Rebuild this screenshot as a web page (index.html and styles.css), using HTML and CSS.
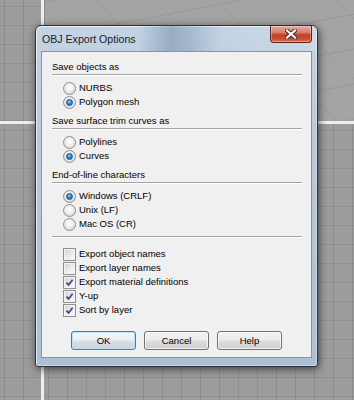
FILE: index.html
```html
<!DOCTYPE html>
<html>
<head>
<meta charset="utf-8">
<title>OBJ Export Options</title>
<link rel="stylesheet" href="styles.css">
</head>
<body>
<div class="desk">
  <div class="views">
    <div class="vp grid"></div>
    <div class="vp persp">
      <svg class="persp-lines" width="310" height="121" viewBox="0 0 310 121">
        <g stroke="#989898" stroke-width="1" fill="none">
          <line x1="-40" y1="10" x2="330" y2="-60"/>
          <line x1="-40" y1="45" x2="330" y2="-25"/>
          <line x1="-40" y1="80" x2="330" y2="10"/>
          <line x1="-40" y1="115" x2="330" y2="45"/>
          <line x1="-40" y1="150" x2="330" y2="80"/>
          <line x1="-40" y1="185" x2="330" y2="115"/>
          <line x1="-20" y1="-10" x2="120" y2="130"/>
          <line x1="40" y1="-10" x2="180" y2="130"/>
          <line x1="100" y1="-10" x2="240" y2="130"/>
          <line x1="160" y1="-10" x2="300" y2="130"/>
          <line x1="220" y1="-10" x2="360" y2="130"/>
          <line x1="280" y1="-10" x2="420" y2="130"/>
        </g>
      </svg>
    </div>
    <div class="vp grid"></div>
    <div class="vp grid"></div>
  </div>

  <div class="dlg">
    <div class="titlebar">
      <span class="title">OBJ Export Options</span>
      <div class="close">
        <svg width="12" height="10" viewBox="0 0 12 10">
          <path d="M2 1.5 L10 8.5 M10 1.5 L2 8.5" stroke="#3a2a28" stroke-width="4" stroke-linecap="square"/>
          <path d="M2 1.5 L10 8.5 M10 1.5 L2 8.5" stroke="#ffffff" stroke-width="2.2" stroke-linecap="square"/>
        </svg>
      </div>
    </div>
    <div class="client">
      <div class="hdr">Save objects as</div>
      <div class="sep"></div>
      <div class="opts">
        <div class="row"><span class="radio"></span><span>NURBS</span></div>
        <div class="row"><span class="radio on"></span><span>Polygon mesh</span></div>
      </div>

      <div class="hdr">Save surface trim curves as</div>
      <div class="sep"></div>
      <div class="opts">
        <div class="row"><span class="radio"></span><span>Polylines</span></div>
        <div class="row"><span class="radio on"></span><span>Curves</span></div>
      </div>

      <div class="hdr">End-of-line characters</div>
      <div class="sep"></div>
      <div class="opts">
        <div class="row"><span class="radio on"></span><span>Windows (CRLF)</span></div>
        <div class="row"><span class="radio"></span><span>Unix (LF)</span></div>
        <div class="row"><span class="radio"></span><span>Mac OS (CR)</span></div>
      </div>

      <div class="sep sep-solo"></div>
      <div class="opts checks">
        <div class="row"><span class="chk"></span><span>Export object names</span></div>
        <div class="row"><span class="chk"></span><span>Export layer names</span></div>
        <div class="row"><span class="chk on"><svg width="11" height="11" viewBox="0 0 11 11"><path d="M2.5 5.6 L4.6 7.9 L8.6 2.8" stroke="#33478a" stroke-width="1.7" fill="none"/></svg></span><span>Export material definitions</span></div>
        <div class="row"><span class="chk on"><svg width="11" height="11" viewBox="0 0 11 11"><path d="M2.5 5.6 L4.6 7.9 L8.6 2.8" stroke="#33478a" stroke-width="1.7" fill="none"/></svg></span><span>Y-up</span></div>
        <div class="row"><span class="chk on"><svg width="11" height="11" viewBox="0 0 11 11"><path d="M2.5 5.6 L4.6 7.9 L8.6 2.8" stroke="#33478a" stroke-width="1.7" fill="none"/></svg></span><span>Sort by layer</span></div>
      </div>

      <div class="btns">
        <div class="btn def">OK</div>
        <div class="btn">Cancel</div>
        <div class="btn">Help</div>
      </div>
    </div>
  </div>
</div>
</body>
</html>
```

FILE: styles.css
```css
html, body {
  margin: 0;
  padding: 0;
}
body {
  width: 354px;
  height: 400px;
  overflow: hidden;
  font-family: "Liberation Sans", Arial, sans-serif;
}
.desk {
  position: relative;
  width: 354px;
  height: 400px;
  overflow: hidden;
}
.views {
  display: grid;
  grid-template-columns: 41px 1fr;
  grid-template-rows: 121px 1fr;
  gap: 3px;
  background: #eeeeee;
  width: 354px;
  height: 400px;
}
.vp {
  overflow: hidden;
}
.grid {
  background-color: #9c9c9c;
  background-image:
    linear-gradient(90deg, rgba(0,0,0,0.09) 1px, transparent 1px),
    linear-gradient(rgba(0,0,0,0.07) 1px, transparent 1px);
  background-size: 19px 19px;
  background-position: 4px 6px;
}
.persp {
  background: #a4a4a4;
  border-left: 1px solid #8a8a8a;
}
.persp-lines {
  display: block;
}

/* dialog window */
.dlg {
  position: absolute;
  left: 35px;
  top: 25px;
  width: 271px;
  height: 332px;
  padding: 0 5px 8px 5px;
  border: 1px solid #2f3235;
  border-radius: 6px 6px 3px 3px;
  background: linear-gradient(180deg, #c4d4e4 0%, #b8cadc 30%, #abc0d6 100%);
  box-shadow: 1px 2px 8px rgba(0,0,0,0.6), inset 1px 1px 0 rgba(255,255,255,0.65), inset -1px -1px 0 rgba(255,255,255,0.4);
}
.titlebar {
  height: 25px;
  display: flex;
  align-items: flex-start;
  justify-content: space-between;
  background: linear-gradient(90deg, rgba(0,0,0,0) 0%, rgba(0,0,0,0) 36%, rgba(70,100,135,0.35) 48%, rgba(70,100,135,0.25) 54%, rgba(0,0,0,0) 66%, rgba(255,255,255,0.15) 100%);
  margin: 0 -5px;
  padding: 0 5px 0 6px;
  border-radius: 6px 6px 0 0;
}
.title {
  font-size: 10.6px;
  color: #161d26;
  line-height: 14px;
  margin-top: 6px;
}
.close {
  width: 40px;
  height: 16px;
  margin-top: -1px;
  border: 1px solid #5e2418;
  border-top-color: #4a241c;
  border-radius: 0 0 4px 4px;
  background: linear-gradient(180deg, #e4aa9e 0%, #d77f6c 40%, #c4412b 55%, #c94a32 80%, #dd7258 100%);
  box-shadow: inset 0 0 0 1px rgba(255,255,255,0.35);
  display: flex;
  align-items: center;
  justify-content: center;
}
.close svg {
  display: block;
}

.client {
  height: 297px;
  border: 1px solid #8196ab;
  background: #f0f0f0;
  padding: 8px 9px 0 10px;
  display: flex;
  flex-direction: column;
  font-size: 9.5px;
  color: #000;
}
.hdr {
  line-height: 14px;
  height: 14px;
}
.sep {
  height: 0;
  border-top: 1px solid #a5a5a5;
  border-bottom: 1px solid #ffffff;
}
.opts {
  display: flex;
  flex-direction: column;
  padding: 5px 0 5px 11px;
}
.sep-solo {
  margin-bottom: 4px;
}
.row {
  display: flex;
  align-items: center;
  gap: 3px;
  height: 14px;
  line-height: 14px;
  white-space: nowrap;
}
.radio {
  width: 11px;
  height: 11px;
  border-radius: 50%;
  border: 1px solid #8d8f90;
  background: radial-gradient(circle at 50% 40%, #ffffff 0%, #f2f2f2 35%, #cfcfcf 100%);
  display: flex;
  align-items: center;
  justify-content: center;
  flex: none;
}
.radio.on::after {
  content: "";
  width: 5px;
  height: 5px;
  border-radius: 50%;
  background: radial-gradient(circle at 45% 35%, #8fd3ff 0%, #2d8fd0 45%, #0f4f8c 100%);
  border: 0.5px solid #1d4f80;
}
.chk {
  width: 11px;
  height: 11px;
  border: 1px solid #8e8f8f;
  background: linear-gradient(135deg, #d0d0d0 0%, #e9e9e9 50%, #fbfbfb 100%);
  box-shadow: inset 0 0 0 1px #f4f4f4;
  display: flex;
  align-items: center;
  justify-content: center;
  flex: none;
}
.chk svg {
  display: block;
}

.btns {
  display: flex;
  justify-content: center;
  gap: 8px;
  margin-top: 9px;
  padding-right: 1px;
}
.btn {
  width: 63px;
  height: 17px;
  line-height: 17px;
  text-align: center;
  border: 1px solid #707070;
  border-radius: 3px;
  background: linear-gradient(180deg, #f2f2f2 0%, #ebebeb 48%, #dddddd 52%, #cfcfcf 100%);
  box-shadow: inset 0 0 0 1px rgba(255,255,255,0.7);
  font-size: 9.5px;
  color: #000;
}
.btn.def {
  border-color: #3c7fb1;
  box-shadow: inset 0 0 0 1px #b9e3f8;
  background: linear-gradient(180deg, #f4f8fa 0%, #eaeef0 48%, #dcdfe1 52%, #d0d3d5 100%);
}
```
